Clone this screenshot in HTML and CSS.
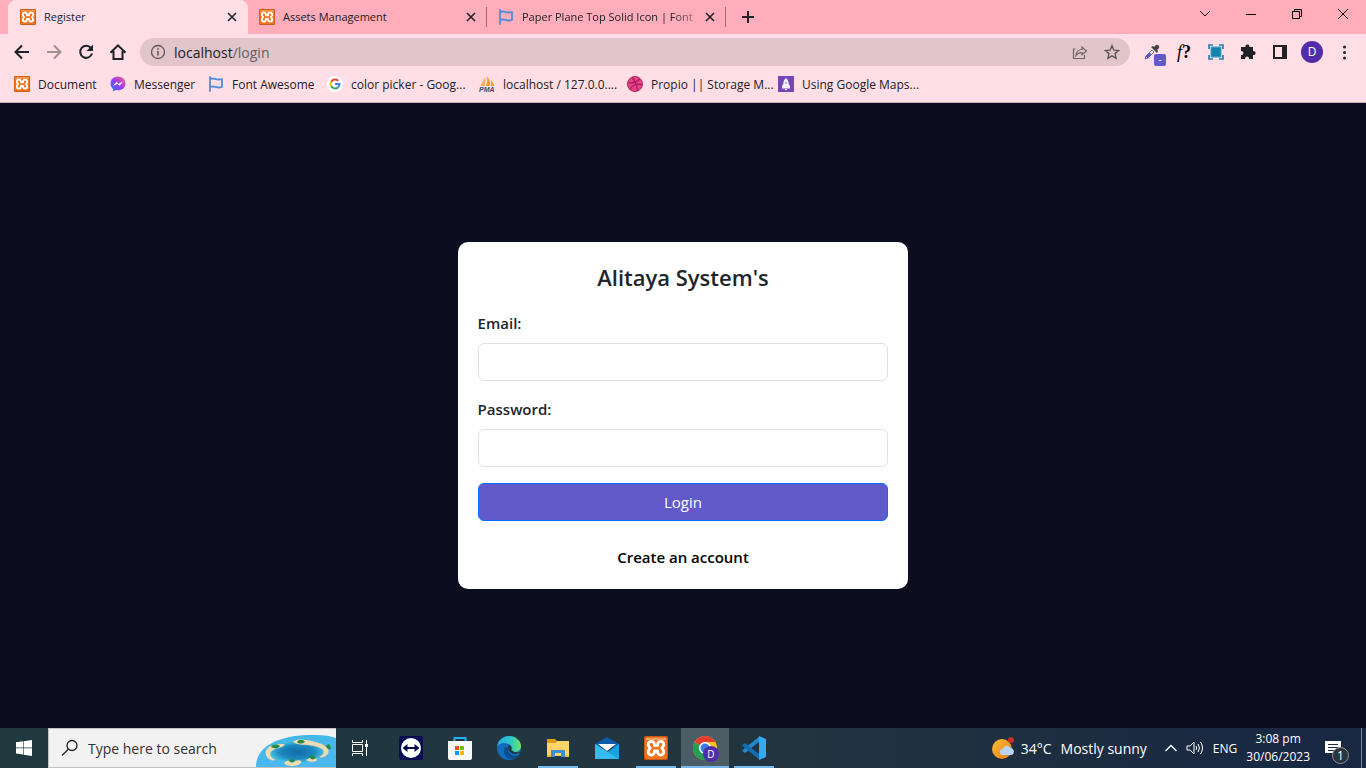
FILE: index.html
```html
<!DOCTYPE html>
<html lang="en">
<head>
<meta charset="utf-8">
<title>Register</title>
<link rel="stylesheet" href="styles.css">
</head>
<body>
<svg class="defs" aria-hidden="true">
  <symbol id="xampp" viewBox="0 0 24 24">
    <rect width="24" height="24" rx="2" fill="#c9560f"/>
    <rect x="1" y="1" width="22" height="22" rx="2" fill="#f07522"/>
    <path d="M2 2h20v2H2z" fill="#f7a264"/>
    <path d="M10.400 9.500V8.500a3.100 3.100 0 0 0-6.200 0c0 1.600.9 2.400 2 3.700-1.100 1.300-2 2.100-2 3.700a3.100 3.100 0 0 0 6.200 0v-1h3.200v1a3.100 3.100 0 0 0 6.200 0c0-1.600-.9-2.400-2-3.700 1.100-1.300 2-2.100 2-3.700a3.100 3.100 0 0 0-6.200 0v1z" fill="none" stroke="#fff" stroke-width="2.800" stroke-linejoin="round"/>
  </symbol>
  <symbol id="flag" viewBox="0 0 16 16">
    <path d="M2 1v14M2 3c4-2 6 2 12 0v8c-6 2-7-2-12 0" fill="none" stroke="#538dd7" stroke-width="1.800" stroke-linecap="round" stroke-linejoin="round"/>
  </symbol>
  <symbol id="close" viewBox="0 0 16 16">
    <path d="M4 4l8 8M12 4l-8 8" fill="none" stroke="#202124" stroke-width="1.600"/>
  </symbol>
</svg>

<header class="browser">
  <div class="tabstrip">
    <div class="tab tab-active">
      <svg class="favicon"><use href="#xampp"/></svg>
      <span class="tab-title">Register</span>
      <button class="tab-close" aria-label="Close tab"><svg><use href="#close"/></svg></button>
    </div>
    <div class="tab tab-lined">
      <svg class="favicon"><use href="#xampp"/></svg>
      <span class="tab-title">Assets Management</span>
      <button class="tab-close" aria-label="Close tab"><svg><use href="#close"/></svg></button>
    </div>
    <div class="tab tab-lined">
      <svg class="favicon"><use href="#flag"/></svg>
      <span class="tab-title tab-title-fade">Paper Plane Top Solid Icon | Font</span>
      <button class="tab-close" aria-label="Close tab"><svg><use href="#close"/></svg></button>
    </div>
    <button class="new-tab" aria-label="New tab"><svg viewBox="0 0 16 16"><path d="M8 2v12M2 8h12" stroke="#202124" stroke-width="2"/></svg></button>
    <div class="window-buttons">
      <button aria-label="Search tabs"><svg viewBox="0 0 16 16"><path d="M3 5l5 5 5-5" fill="none" stroke="#111"/></svg></button>
      <button aria-label="Minimize"><svg viewBox="0 0 16 16"><path d="M3 8.500h10" stroke="#000"/></svg></button>
      <button aria-label="Restore"><svg viewBox="0 0 16 16"><path d="M3.500 5.500h7v7h-7zM5.500 5v-1.500h7v7H11" fill="none" stroke="#000"/></svg></button>
      <button aria-label="Close window"><svg viewBox="0 0 16 16"><path d="M3 3l10 10M13 3L3 13" stroke="#000"/></svg></button>
    </div>
  </div>

  <div class="toolbar">
    <button class="tool" aria-label="Back"><svg viewBox="0 0 20 20"><path d="M17 10H4M10 3.500L3.500 10l6.500 6.500" fill="none" stroke="#202124" stroke-width="2"/></svg></button>
    <button class="tool" aria-label="Forward"><svg viewBox="0 0 20 20"><path d="M3 10h13M10 3.500l6.500 6.500-6.500 6.500" fill="none" stroke="#a28f94" stroke-width="2"/></svg></button>
    <button class="tool" aria-label="Reload"><svg viewBox="0 0 20 20"><path d="M15 6.200A6 6 0 1 0 16 11.500" fill="none" stroke="#202124" stroke-width="2"/><path d="M17 2.500V9h-6.500z" fill="#202124"/></svg></button>
    <button class="tool" aria-label="Home"><svg viewBox="0 0 20 20"><path d="M5.500 9v8h9V9M2.500 10.800L10 3.300l7.500 7.500" fill="none" stroke="#202124" stroke-width="2"/></svg></button>
    <div class="omnibox">
      <svg class="info" viewBox="0 0 16 16"><circle cx="8" cy="8" r="6.500" fill="none" stroke="#5f5659" stroke-width="1.300"/><path d="M8 7v4.500M8 4.300v1.500" stroke="#5f5659" stroke-width="1.500"/></svg>
      <span class="url">localhost<span class="path">/login</span></span>
      <button class="omni-button" aria-label="Share"><svg viewBox="0 0 16 16"><path d="M3.500 5H1.500v9.500h11V11M4 11.500c.5-4 2.500-6 6-6V3l4.500 4L10 10.800V8.500c-3 0-4.500 1-6 3z" fill="none" stroke="#716569" stroke-width="1.200"/></svg></button>
      <button class="omni-button" aria-label="Bookmark this page"><svg viewBox="0 0 16 16"><path d="M8 1.800l1.900 4.300 4.700.4-3.600 3.100 1.100 4.600L8 11.800l-4.100 2.400L5 9.600 1.400 6.500l4.700-.4z" fill="none" stroke="#5f5659" stroke-width="1.400"/></svg></button>
    </div>
    <div class="extensions">
      <button class="tool" aria-label="Eyedropper"><svg viewBox="0 0 20 20"><path d="M3 17l1-3 6-6 2 2-6 6z" fill="#e9e6f4" stroke="#777" stroke-width="1"/><path d="M4.500 15.500l4-4" stroke="#3d43dc" stroke-width="2"/><path d="M9 5l6 6 1-2-1-1c4-2 2-6-1-5l-2 2-1-1z" fill="#454545"/></svg><span class="badge">-</span></button>
      <button class="tool whatfont" aria-label="WhatFont"><i>f</i><b>?</b></button>
      <button class="tool" aria-label="Capture"><svg viewBox="0 0 20 20"><path d="M5 5h10v10H5z" fill="#1683ac" stroke="#48a5c7"/><path d="M3 7V3h4M13 3h4v4M17 13v4h-4M7 17H3v-4" fill="none" stroke="#1683ac" stroke-width="1.600"/></svg></button>
      <button class="tool" aria-label="Extensions"><svg viewBox="0 0 20 20"><path d="M3 5h4.500C6.800 1.700 12 1.700 11.400 5H15v4c3.500-.7 3.500 4.600 0 4v4h-4c.5-3.300-4.300-3.300-3.800 0H3v-4c3.200.5 3.200-4.500 0-4z" fill="#202124"/></svg></button>
      <button class="tool" aria-label="Side panel"><svg viewBox="0 0 20 20"><path d="M4 4h12v12H4z" fill="none" stroke="#202124" stroke-width="2"/><path d="M12 4h4v12h-4z" fill="#202124"/></svg></button>
      <button class="tool" aria-label="Profile"><span class="avatar">D</span></button>
      <button class="tool" aria-label="Menu"><svg viewBox="0 0 20 20" fill="#202124"><circle cx="10.500" cy="5" r="1.500"/><circle cx="10.500" cy="10.500" r="1.500"/><circle cx="10.500" cy="16" r="1.500"/></svg></button>
    </div>
  </div>

  <nav class="bookmarks">
    <a href="#"><svg><use href="#xampp"/></svg><span>Document</span></a>
    <a href="#"><svg viewBox="0 0 16 16"><defs><linearGradient id="msg" x1="0" y1="1" x2="1" y2="0"><stop offset="0" stop-color="#1388ff"/><stop offset=".5" stop-color="#9a38f5"/><stop offset="1" stop-color="#ff6c68"/></linearGradient></defs><path d="M8 .5c4.300 0 7.500 3 7.500 7S12.300 14.300 8 14.300l-2-.2L3 15.500v-2.600C1.500 11.600.5 9.800.5 7.500.5 3.500 3.700.5 8 .5z" fill="url(#msg)"/><path d="M3.800 9.300l2.700-3 2.300 1.800 3.500-2-2.700 3.300-2.300-1.700z" fill="#fff" stroke="#fff" stroke-width=".5"/></svg><span>Messenger</span></a>
    <a href="#"><svg><use href="#flag"/></svg><span>Font Awesome</span></a>
    <a href="#"><svg viewBox="0 0 16 16" fill="none" stroke-width="2"><circle cx="8" cy="8" r="8" fill="#fff"/><path d="M4.200 5.700A4.600 4.600 0 0 1 11.200 4.800" stroke="#ea4335"/><path d="M4.200 10.300a4.600 4.600 0 0 1 0-4.600" stroke="#fbbc05"/><path d="M11 11.400a4.600 4.600 0 0 1-6.800-1.100" stroke="#34a853"/><path d="M8 8h4.500c0 1.400-.5 2.600-1.500 3.400" stroke="#4285f4"/></svg><span>color picker - Goog...</span></a>
    <a href="#"><svg viewBox="0 0 16 16"><path d="M6.500 1L6 10H1.500C3 6.500 4.500 3 6.500 1z" fill="#f9b25a"/><path d="M8 0c2 3 4 6 3 10H7c1.500-3 1.500-7 1-10zM12 4c1.500 2 3 4 3 6h-3z" fill="#f79a1f"/><text x="0" y="16" class="pma">PMA</text></svg><span>localhost / 127.0.0....</span></a>
    <a href="#"><svg viewBox="0 0 16 16"><circle cx="8" cy="8" r="7.500" fill="#e5428a" stroke="#b52463"/><path d="M5 1.200c3 4 5 8 5.500 13.500M1 7c5 .2 9-1 12-4M3 13.500C5 9 10 7 15 8.800" fill="none" stroke="#a91d58" stroke-width="1.200"/></svg><span>Propio || Storage M...</span></a>
    <a href="#"><svg viewBox="0 0 16 16"><path d="M0 0h16v16H0z" fill="#7347b8"/><path d="M8 2c2 1.500 2.700 3.500 2.700 6l1.300 2v2.500H4V10l1.300-2c0-2.500.7-4.500 2.700-6zM6.500 13h3L8 14.500z" fill="#f5effc"/><circle cx="8" cy="7" r="1" fill="#b49ad8"/></svg><span>Using Google Maps...</span></a>
  </nav>
</header>

<main class="page">
  <form class="card">
    <h1>Alitaya System's</h1>
    <div class="field">
      <label for="email">Email:</label>
      <input id="email" type="email">
    </div>
    <div class="field">
      <label for="password">Password:</label>
      <input id="password" type="password">
    </div>
    <button class="login" type="button">Login</button>
    <a class="create" href="#">Create an account</a>
  </form>
</main>

<footer class="taskbar">
  <button class="task" aria-label="Start"><svg class="small" viewBox="0 0 16 16" fill="#fff"><path d="M0 2.300L7 1.300V7.600H0zM7.600 1.200L16 0v7.600H7.600zM0 8.300h7v6.300l-7-1zM7.600 8.300H16V16l-8.400-1.200z"/></svg></button>
  <div class="search">
    <svg class="glass" viewBox="0 0 18 18"><circle cx="11" cy="6.500" r="5" fill="none" stroke="#222" stroke-width="1.300"/><path d="M7.300 10.200L1 16.500" stroke="#222" stroke-width="1.300"/></svg>
    <input type="text" placeholder="Type here to search" aria-label="Type here to search">
    <svg class="island" viewBox="0 0 80 32"><defs><linearGradient id="sea" x2="0" y2="1"><stop offset="0" stop-color="#45b7e6"/><stop offset="1" stop-color="#4bb8f2"/></linearGradient><radialGradient id="deep"><stop offset="0" stop-color="#126ba7"/><stop offset=".6" stop-color="#1b87bd"/><stop offset="1" stop-color="#47c2e2"/></radialGradient></defs><path d="M0 32C0 8 30-1 60 0q12 0 20 3v29z" fill="url(#sea)"/><ellipse cx="41" cy="17" rx="28" ry="11" fill="url(#deep)"/><path d="M28 9c-14-1-22 6-17 13 2 3 5 4 9 3-9-4-7-10 3-12 4-1 7-3 5-4zM37 7c4-4 13-2 19-1 13 3 20 8 15 14-2 2-6 3-8 2 9-5 4-9-5-11-6-2-16 0-21-4zM28 28c4-4 7-1 11-2 6-2 9 1 3 4-5 2-12 1-14-2zM50 25c4-3 9-4 11-1 1 3-7 4-11 1z" fill="#f0dab2"/><path d="M15 12c2-3 6-3 9-1-2 3-5 3-9 1zM41 7c2-3 6-3 8 0-3 2-6 2-8 0zM70 11c3-3 4-2 5 3-2 1-4 0-5-3zM33 26c1-3 4-3 6 0-2 2-4 2-6 0zM53 22c2-3 6-2 7 1-2 2-5 2-7-1z" fill="#258b47"/></svg>
  </div>
  <button class="task" aria-label="Task view"><svg class="small" viewBox="0 0 16 16" fill="none" stroke="#fff"><path d="M.5 0v2.500h10V0M.5 16v-2.500h10V16M.5 4.500h10v7H.5zM14.500 0v16"/><path d="M13 4h3v3h-3z" fill="#fff" stroke="none"/></svg></button>
  <div class="apps">
    <button class="task" aria-label="TeamViewer"><svg viewBox="0 0 24 24"><rect width="24" height="24" rx="2" fill="#070d52"/><circle cx="12" cy="12" r="10" fill="#fff"/><path d="M3.500 12l5-4v3h7V8l5 4-5 4v-3h-7v3z" fill="#070d52"/></svg></button>
    <button class="task" aria-label="Microsoft Store"><svg viewBox="0 0 24 24"><path d="M6.500 6V2h11v4" fill="none" stroke="#25b1ee" stroke-width="2"/><path d="M0 5h24v17q0 2-2 2H2q-2 0-2-2z" fill="#f8f9fb"/><path d="M7 10h4v4H7z" fill="#f15022"/><path d="M12 10h4v4h-4z" fill="#78b900"/><path d="M7 15h4v4H7z" fill="#009eea"/><path d="M12 15h4v4h-4z" fill="#ffb800"/></svg></button>
    <button class="task" aria-label="Edge"><svg viewBox="0 0 24 24"><defs><linearGradient id="edge" x1="0" x2="1"><stop offset="0" stop-color="#2ca8e8"/><stop offset=".6" stop-color="#2ccbc4"/><stop offset="1" stop-color="#72e45b"/></linearGradient></defs><circle cx="12" cy="12" r="12" fill="#126cbd"/><path d="M0 11C1 4 6 0 12 0c7 0 12 5 12 10 0 4-3 6-6.500 6-3 0-4-1-4-2l1.300-2C15 7 3 4 0 11z" fill="url(#edge)"/><path d="M8 11c-3 6 1 12 7 12 3 0 6-2 7-4-5 2-12 0-11-7" fill="#0b4c91"/><path d="M14.500 12q0-2-2-3c-2 1-2 3-1 5 2 4 7 5 10 3 2-1 2 1 1 3l2 0v-5q-6 3-10-1z" fill="#213740"/></svg></button>
    <button class="task task-open" aria-label="File Explorer"><svg viewBox="0 0 24 24"><path d="M1 3h8l2 2h12v5H1z" fill="#dc9c15"/><path d="M1 7h9l1-2h12v15H1z" fill="#ffd667"/><path d="M5 21v-7h14v7h-4v-4H9v4z" fill="#3b8fd4"/><path d="M1 19h4v2H1zM19 19h4v2h-4z" fill="#efb73e"/></svg></button>
    <button class="task" aria-label="Mail"><svg viewBox="0 0 24 24"><path d="M0 8L12 1l12 7v3H0z" fill="#0b5cab"/><path d="M0 8l12 8 12-8v15H0z" fill="#1c9fe0"/><path d="M0 8l24 15H0z" fill="#35bdf3"/><path d="M3 8h18l-9 7z" fill="#f6f7f8"/></svg></button>
    <button class="task task-open" aria-label="XAMPP"><svg><use href="#xampp"/></svg></button>
    <button class="task task-current" aria-label="Chrome"><svg viewBox="0 0 24 24"><circle cx="12" cy="12" r="12" fill="#fbc116"/><path d="M12 12L1.600 6A12 12 0 0 1 22.400 6H12z" fill="#e33b2e"/><path d="M1.600 6A12 12 0 0 0 12 24l5-9-5-3z" fill="#239f55"/><circle cx="12" cy="12" r="6" fill="#fff"/><circle cx="12" cy="12" r="4.500" fill="#347fe8"/></svg><span class="task-badge">D</span></button>
    <button class="task task-open" aria-label="Visual Studio Code"><svg viewBox="0 0 24 24"><path d="M18 5L3 17l-3-2.500L18 0z" fill="#2489ca"/><path d="M18 19L3 7 0 9.500 18 24z" fill="#1070b3"/><path d="M17 0l7 3v18l-7 3z" fill="#32a9f1"/></svg></button>
  </div>
  <div class="tray">
    <button class="weather"><svg viewBox="0 0 24 24"><defs><linearGradient id="sun" x2="1" y2="1"><stop offset="0" stop-color="#f6bd35"/><stop offset="1" stop-color="#ed7c16"/></linearGradient></defs><circle cx="11" cy="13" r="10" fill="url(#sun)"/><circle cx="20" cy="4" r="3" fill="#ca3027"/><path d="M12 19a3 3 0 0 1 0-6c1-4 6-4 7-1 5 0 5 7 1 7z" fill="#b9d4fa"/></svg><span>34°C</span><span>Mostly sunny</span></button>
    <button class="tray-button" aria-label="Show hidden icons"><svg viewBox="0 0 16 16"><path d="M2.500 11L8 5.500l5.500 5.500" fill="none" stroke="#fff" stroke-width="1.300"/></svg></button>
    <button class="tray-button" aria-label="Volume"><svg viewBox="0 0 18 16"><path d="M1 6h3l4-4v12l-4-4H1zM10 6q1.500 2 0 4M12 4q3 4 0 8M14.500 2q4 6 0 12" fill="none" stroke="#fff"/></svg></button>
    <span class="language">ENG</span>
    <div class="clock"><span>3:08 pm</span><span>30/06/2023</span></div>
    <button class="notices" aria-label="Notifications"><svg viewBox="0 0 16 16"><path d="M0 1h16v12h-5v3l-3-3H0z" fill="#fff"/><path d="M3 4.500h10M3 7.500h10M3 10.500h6" stroke="#1c2c43"/></svg><span class="count">1</span></button>
  </div>
</footer>
</body>
</html>
```

FILE: styles.css
```css
* { box-sizing: border-box; }

body {
  margin: 0;
  min-height: 100vh;
  display: flex;
  flex-direction: column;
  font-family: "Open Sans", "Noto Sans", sans-serif;
  font-size: 12px;
  color: #202124;
}

button {
  padding: 0;
  border: 0;
  background: none;
  font: inherit;
  color: inherit;
}

svg { display: block; flex: none; width: 16px; height: 16px; }
a { color: inherit; text-decoration: none; }
.defs { position: absolute; width: 0; height: 0; }

/* Browser chrome */
.browser { background: #ffdfe5; border-bottom: 1px solid #c9adb6; }

.tabstrip {
  display: flex;
  height: 34px;
  padding-left: 8px;
  background: #ffacbb;
}

.tab {
  display: flex;
  align-items: center;
  width: 239px;
  padding: 0 8px 0 11px;
  font-size: 11px;
  line-height: 34px;
}

.tab-active {
  width: 240px;
  padding-left: 12px;
  background: #ffdfe5;
  border-radius: 8px 8px 0 0;
}

.tab-lined {
  background: linear-gradient(#9b6d76, #9b6d76) right center / 1px 20px no-repeat;
}

.tab-title {
  flex: 1;
  margin: 0 4px 0 8px;
  white-space: nowrap;
}

.tab-title-fade { mask-image: linear-gradient(to right, #000 85%, #0004); }
.new-tab { display: grid; place-items: center; width: 44px; }
.window-buttons { display: flex; height: 28px; margin-left: auto; }
.window-buttons button { display: grid; place-items: center; width: 46px; }

.toolbar {
  display: flex;
  align-items: center;
  height: 36px;
  padding: 0 6px;
}

.tool {
  position: relative;
  display: grid;
  place-items: center;
  width: 32px;
  height: 32px;
}

.tool svg { width: 20px; height: 20px; }

.omnibox {
  flex: 1;
  display: flex;
  align-items: center;
  height: 28px;
  margin: 0 6px;
  padding: 0 2px 0 10px;
  border-radius: 14px;
  background: #e1c5ca;
}

.url { flex: 1; margin-left: 8px; font-size: 14px; }
.path { color: #6a5d62; }
.omni-button { display: grid; place-items: center; width: 32px; height: 28px; }
.extensions { display: flex; }
.extensions .badge {
  position: absolute;
  right: 2px;
  bottom: 2px;
  width: 12px;
  height: 12px;
  border-radius: 2px;
  background: #6259ca;
  color: #fff;
  font-size: 10px;
  line-height: 11px;
}

.whatfont { display: block; font: 18px/30px "Liberation Serif", serif; color: #000; }

.avatar {
  width: 22px;
  height: 22px;
  border-radius: 50%;
  background: #512da8;
  color: #fff;
  line-height: 22px;
}

.bookmarks {
  display: grid;
  grid-template-columns: 96px 98px 119px 152px 148px 151px auto;
  height: 32px;
  padding: 0 14px;
}

.bookmarks a {
  display: flex;
  align-items: center;
  gap: 8px;
  height: 28px;
  white-space: nowrap;
}

.pma { font: italic 700 7px "Liberation Sans", sans-serif; fill: #3d4770; }

/* Login page */
.page {
  flex: 1;
  display: grid;
  place-items: center;
  background: #0d0d20;
  font-size: 15px;
  color: #212529;
}

.card {
  display: flex;
  flex-direction: column;
  width: 33%;
  padding: 20px;
  border-radius: 10px;
  background: #fff;
  line-height: 24px;
}

.card h1 {
  margin: 0 0 18px;
  font-size: 22px;
  font-weight: 600;
  line-height: 31px;
  text-align: center;
}

.field { display: grid; gap: 8px; margin-bottom: 16px; }
.field label { font-weight: 600; }

.field input {
  width: 100%;
  height: 38px;
  padding: 6px 12px;
  border: 1px solid #dee2e6;
  border-radius: 6px;
  font: inherit;
}

.login {
  height: 38px;
  border: 1px solid #0d6efd;
  border-radius: 6px;
  background: #6259ca;
  color: #fff;
}

.create {
  align-self: center;
  margin-top: 24px;
  font-weight: 600;
  color: #000;
}

/* Desktop taskbar */
.taskbar {
  display: flex;
  height: 40px;
  background: linear-gradient(to right, #20393f, #22353f 55%, #1b2b42 85%, #182742);
  color: #fff;
}

.task {
  position: relative;
  display: grid;
  place-items: center;
  width: 48px;
  height: 40px;
}

.task svg { width: 24px; height: 24px; }
.task .small { width: 16px; height: 16px; }

.search {
  display: flex;
  align-items: center;
  width: 288px;
  padding-left: 12px;
  border: 1px solid #c4c4c4;
  border-right: 0;
  background: #f2f2f2;
}

.glass { width: 18px; height: 18px; }

.search input {
  flex: 1;
  min-width: 0;
  margin-left: 9px;
  padding: 0;
  border: 0;
  background: none;
  font: inherit;
  font-size: 14px;
}

.search input::placeholder { color: #333; opacity: 1; }
.island { align-self: flex-end; width: 80px; height: 32px; }
.apps { display: flex; gap: 1px; margin-left: 3px; }

.task-open {
  background: linear-gradient(#76b9ed, #76b9ed) center bottom / 40px 2px no-repeat;
}

.task-current {
  background: #4c5d66;
  box-shadow: inset 0 -2px #76b9ed;
}

.task-badge {
  position: absolute;
  right: 10px;
  bottom: 6px;
  width: 16px;
  height: 16px;
  border-radius: 50%;
  background: #512da8;
  font-size: 10px;
  line-height: 16px;
}

.tray { display: flex; align-items: center; margin-left: auto; }
.weather { display: flex; align-items: center; gap: 9px; margin-right: 12px; font-size: 14px; white-space: nowrap; }
.weather svg { width: 24px; height: 24px; margin-right: -3px; }
.tray-button { display: grid; place-items: center; width: 24px; height: 40px; }
.tray-button svg { width: 18px; }
.language { margin-left: 6px; }
.clock { display: grid; margin: 0 15px 0 9px; line-height: 18px; text-align: center; }

.notices {
  position: relative;
  display: grid;
  place-items: center start;
  width: 37px;
  height: 40px;
  margin-right: 4px;
  border-right: 1px solid #7b8798;
}

.count {
  position: absolute;
  left: 7px;
  bottom: 4px;
  width: 17px;
  height: 17px;
  border: 1px solid #8d929a;
  border-radius: 50%;
  background: #2d333d;
  font-size: 12px;
  line-height: 15px;
}
```
